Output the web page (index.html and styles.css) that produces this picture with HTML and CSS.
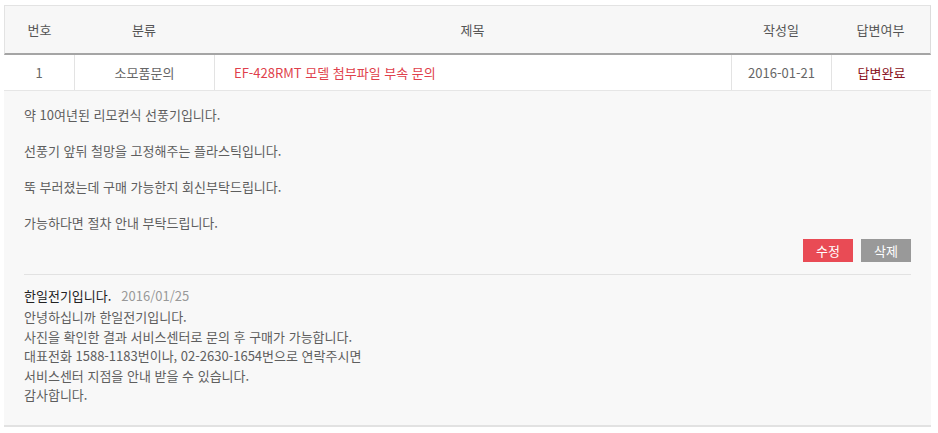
FILE: index.html
```html
<!DOCTYPE html>
<html lang="ko">
<head>
<meta charset="utf-8">
<link rel="stylesheet" href="styles.css">
</head>
<body>
<div class="board">
  <div class="head">
    <div class="c c1">번호</div>
    <div class="c c2">분류</div>
    <div class="c c3 center">제목</div>
    <div class="c c4">작성일</div>
    <div class="c c5">답변여부</div>
  </div>
  <div class="row">
    <div class="c c1">1</div>
    <div class="c c2 sep">소모품문의</div>
    <div class="c c3 sep title">EF-428RMT 모델 첨부파일 부속 문의</div>
    <div class="c c4 sep">2016-01-21</div>
    <div class="c c5 sep done">답변완료</div>
  </div>
  <div class="detail">
    <div class="question">
      <p>약 10여년된 리모컨식 선풍기입니다.</p>
      <p>선풍기 앞뒤 철망을 고정해주는 플라스틱입니다.</p>
      <p>뚝 부러졌는데 구매 가능한지 회신부탁드립니다.</p>
      <p>가능하다면 절차 안내 부탁드립니다.</p>
    </div>
    <div class="btns">
      <button class="btn edit">수정</button>
      <button class="btn del">삭제</button>
    </div>
    <div class="answer">
      <div class="ans-head"><span class="name">한일전기입니다.</span><span class="date">2016/01/25</span></div>
      <div class="ans-body">안녕하십니까 한일전기입니다.<br>사진을 확인한 결과 서비스센터로 문의 후 구매가 가능합니다.<br>대표전화 1588-1183번이나, 02-2630-1654번으로 연락주시면<br>서비스센터 지점을 안내 받을 수 있습니다.<br>감사합니다.</div>
    </div>
  </div>
</div>
</body>
</html>
```

FILE: styles.css
```css
html, body {
  margin: 0;
  padding: 0;
  background: #fff;
}
body {
  font-family: "Noto Sans CJK KR", "Noto Sans", sans-serif;
  font-size: 13px;
  color: #555;
}
.board {
  width: 927px;
  margin: 5px 0 0 4px;
}
.head {
  display: flex;
  height: 47px;
  background: #f7f7f7;
  border: 1px solid #e3e3e3;
  border-bottom: 2px solid #a5a5a5;
  border-right-color: #dcdcdc;
}
.head .c {
  line-height: 47px;
}
.c {
  text-align: center;
  box-sizing: border-box;
  white-space: nowrap;
}
.c1 { width: 70px; }
.c2 { width: 140px; }
.c3 { width: 517px; }
.c4 { width: 100px; }
.c5 { width: 100px; }
.head .c1 { width: 69px; }
.head .c5 { width: 99px; }
.row {
  display: flex;
  height: 35px;
  border-bottom: 1px solid #e6e6e6;
  background: #fff;
}
.row .c {
  line-height: 35px;
  color: #666;
}
.row .sep {
  border-left: 1px solid #e3e3e3;
}
.row .title {
  text-align: left;
  padding-left: 19px;
  color: #df3f4c;
}
.row .done {
  color: #8a1222;
}
.detail {
  background: #f8f8f8;
  border-bottom: 2px solid #e2e2e2;
  padding: 14px 20px 20px 20px;
}
.question p {
  margin: 0 0 16px 0;
  line-height: 20px;
  color: #5e5e5e;
}
.question p:last-child {
  margin-bottom: 0;
}
.btns {
  display: flex;
  justify-content: flex-end;
  gap: 8px;
  margin-top: 6px;
  padding-bottom: 12px;
  border-bottom: 1px solid #e2e2e2;
}
.btn {
  width: 50px;
  height: 23px;
  border: 0;
  padding: 0;
  font-family: inherit;
  font-size: 13px;
  line-height: 23px;
  color: #fff;
}
.edit { background: #e94b55; }
.del { background: #999; }
.answer {
  padding-top: 11px;
}
.ans-head {
  line-height: 20px;
}
.name {
  color: #222;
  margin-right: 10px;
}
.date {
  color: #999;
}
.ans-body {
  line-height: 19.5px;
  margin-top: 1px;
  color: #5e5e5e;
}
```
